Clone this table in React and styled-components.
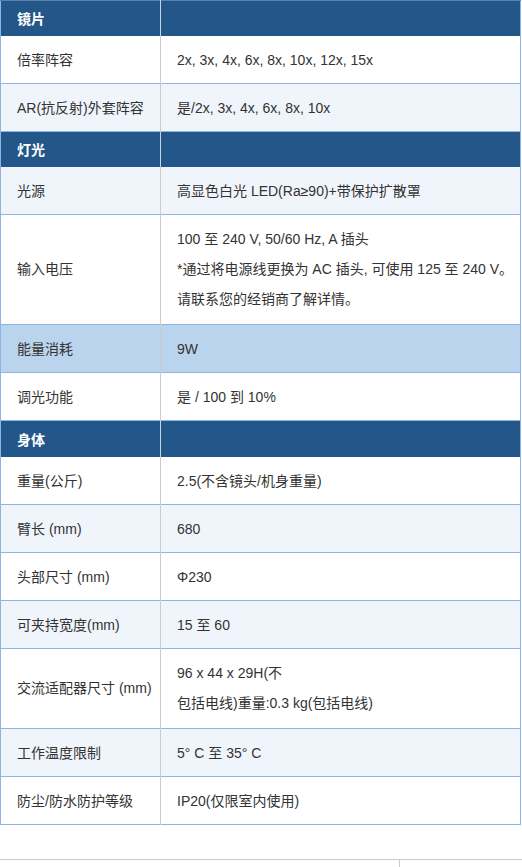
import React from 'react';
import styled, { createGlobalStyle } from 'styled-components';

const GlobalStyle = createGlobalStyle`
    html, body {
        margin: 0;
        padding: 0;
        background: #ffffff;
    }
    body {
        font-family: "Liberation Sans", "Noto Sans CJK SC", sans-serif;
        color: #333333;
    }
`

const Page = styled.div`
    width: 522px;
    display: flex;
    flex-direction: column;
`

const SpecTable = styled.table`
    width: 521px;
    border-collapse: collapse;
    border: 1px solid #8db4e2;
    table-layout: fixed;
    font-size: 14px;
    .labelCol {
        width: 160px;
    }
`

const HeadRow = styled.tr`
    background-color: #235789;
    border-top: 1px solid #5a82aa;
    th {
        height: ${props => props.$first ? '35px' : '36px'};
        padding: 0 16px;
        text-align: left;
        color: #ffffff;
        font-weight: bold;
        font-size: 14px;
        box-sizing: border-box;
    }
    th + th {
        border-left: 1px solid #c9d3de;
    }
`

const rowColors = {
    white: '#ffffff',
    light: '#f0f5fc',
    active: '#bbd4ed',
}

const Row = styled.tr`
    background-color: ${props => rowColors[props.$tone || 'white']};
    border-bottom: 1px solid #8db4e2;
    td {
        padding: 9px 16px ${props => props.$multi ? '10px' : '8px'} 16px;
        line-height: 30px;
        vertical-align: middle;
        color: #333333;
        white-space: nowrap;
    }
    td + td {
        border-left: 1px solid #cccccc;
    }
`

const Line = styled.div`
    line-height: 30px;
    white-space: nowrap;
`

const NextTable = styled.div`
    margin-top: 34px;
    border-top: 1px solid #cccccc;
    display: flex;
    height: 8px;
    .cell {
        width: 399px;
        border-right: 1px solid #cccccc;
    }
`

const sections = [
    {
        title: '镜片',
        rows: [
            { label: '倍率阵容', value: ['2x, 3x, 4x, 6x, 8x, 10x, 12x, 15x'], tone: 'white' },
            { label: 'AR(抗反射)外套阵容', value: ['是/2x, 3x, 4x, 6x, 8x, 10x'], tone: 'light' },
        ],
    },
    {
        title: '灯光',
        rows: [
            { label: '光源', value: ['高显色白光 LED(Ra≥90)+带保护扩散罩'], tone: 'light' },
            {
                label: '输入电压',
                value: [
                    '100 至 240 V, 50/60 Hz, A 插头',
                    '*通过将电源线更换为 AC 插头, 可使用 125 至 240 V。',
                    '请联系您的经销商了解详情。',
                ],
                tone: 'white',
            },
            { label: '能量消耗', value: ['9W'], tone: 'active' },
            { label: '调光功能', value: ['是 / 100 到 10%'], tone: 'white' },
        ],
    },
    {
        title: '身体',
        rows: [
            { label: '重量(公斤)', value: ['2.5(不含镜头/机身重量)'], tone: 'white' },
            { label: '臂长 (mm)', value: ['680'], tone: 'light' },
            { label: '头部尺寸 (mm)', value: ['Φ230'], tone: 'white' },
            { label: '可夹持宽度(mm)', value: ['15 至 60'], tone: 'light' },
            {
                label: '交流适配器尺寸 (mm)',
                value: ['96 x 44 x 29H(不', '包括电线)重量:0.3 kg(包括电线)'],
                tone: 'white',
            },
            { label: '工作温度限制', value: ['5° C 至 35° C'], tone: 'light' },
            { label: '防尘/防水防护等级', value: ['IP20(仅限室内使用)'], tone: 'white' },
        ],
    },
]

const App = () => {
    return (
        <>
            <GlobalStyle />
            <Page>
                <SpecTable>
                    <colgroup>
                        <col className='labelCol' />
                        <col />
                    </colgroup>
                    {sections.map((section, index) => (
                        <tbody key={section.title}>
                            <HeadRow $first={index === 0}>
                                <th>{section.title}</th>
                                <th></th>
                            </HeadRow>
                            {section.rows.map(row => (
                                <Row key={row.label} $tone={row.tone} $multi={row.value.length > 1}>
                                    <td>{row.label}</td>
                                    <td>
                                        {row.value.map(text => (
                                            <Line key={text}>{text}</Line>
                                        ))}
                                    </td>
                                </Row>
                            ))}
                        </tbody>
                    ))}
                </SpecTable>
                <NextTable>
                    <div className='cell'></div>
                </NextTable>
            </Page>
        </>
    )
}

export default App;
